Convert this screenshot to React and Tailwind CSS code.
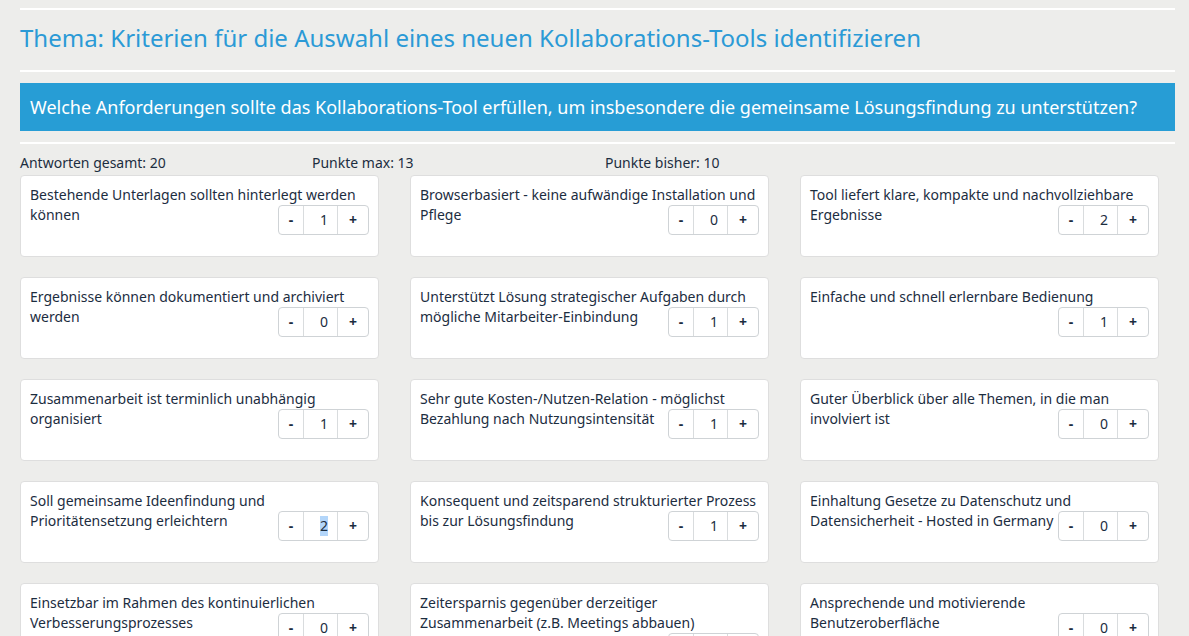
const items = [
  { text: "Bestehende Unterlagen sollten hinterlegt werden können", value: 1 },
  { text: "Browserbasiert - keine aufwändige Installation und Pflege", value: 0 },
  { text: "Tool liefert klare, kompakte und nachvollziehbare Ergebnisse", value: 2 },
  { text: "Ergebnisse können dokumentiert und archiviert werden", value: 0 },
  { text: "Unterstützt Lösung strategischer Aufgaben durch mögliche Mitarbeiter-Einbindung", value: 1 },
  { text: "Einfache und schnell erlernbare Bedienung", value: 1 },
  { text: "Zusammenarbeit ist terminlich unabhängig organisiert", value: 1 },
  { text: "Sehr gute Kosten-/Nutzen-Relation - möglichst Bezahlung nach Nutzungsintensität", value: 1 },
  { text: "Guter Überblick über alle Themen, in die man involviert ist", value: 0 },
  { text: "Soll gemeinsame Ideenfindung und Prioritätensetzung erleichtern", value: 2, selected: true },
  { text: "Konsequent und zeitsparend strukturierter Prozess bis zur Lösungsfindung", value: 1 },
  { text: "Einhaltung Gesetze zu Datenschutz und Datensicherheit - Hosted in Germany", value: 0 },
  { text: "Einsetzbar im Rahmen des kontinuierlichen Verbesserungsprozesses", value: 0 },
  { text: "Zeitersparnis gegenüber derzeitiger Zusammenarbeit (z.B. Meetings abbauen)", value: 0 },
  { text: "Ansprechende und motivierende Benutzeroberfläche", value: 0 },
]

function Stepper({ value, selected }) {
  return (
    <span className="float-right flex h-[30px] w-[91px] rounded-[4px] border border-[#cfd3d6] bg-white text-[14px] text-[#1c2d3f]">
      <button className="w-[25px] border-r border-[#d9dcde] font-bold leading-none">-</button>
      <span className="flex-1 flex items-center justify-end pr-[9px] border-r border-[#d9dcde]">
        {selected ? <span className="bg-[#b3d6fa]">{value}</span> : value}
      </span>
      <button className="w-[30px] font-bold leading-none">+</button>
    </span>
  )
}

function Card({ item }) {
  return (
    <div className="h-[82px] rounded-[4px] border border-[#dedede] bg-white px-[9px] pt-[9px] text-[14px] leading-[20px] text-[#1c2d3f]">
      {item.text}
      <Stepper value={item.value} selected={item.selected} />
    </div>
  )
}

export default function App() {
  return (
    <div
      className="min-h-screen bg-[#ededeb] pl-[20px] pt-[8px] overflow-hidden"
      style={{ fontFamily: '"Noto Sans", "Open Sans", sans-serif' }}
    >
      <div className="w-[1155px]">
        <div className="h-[2px] bg-white"></div>
        <h1 className="pt-[13px] pb-[17px] text-[24px] leading-[30px] text-[#2b9ad6]">
          Thema: Kriterien für die Auswahl eines neuen Kollaborations-Tools identifizieren
        </h1>
        <div className="h-[2px] bg-white"></div>
        <div className="mt-[11px] h-[48px] flex items-center bg-[#279dd5] px-[10px] text-[18px] text-white">
          Welche Anforderungen sollte das Kollaborations-Tool erfüllen, um insbesondere die gemeinsame Lösungsfindung zu unterstützen?
        </div>
        <div className="mt-[11px] h-[2px] bg-white"></div>
      </div>
      <div className="flex pt-[9px] h-[31px] text-[14px] leading-[20px] text-[#1c2d3f]">
        <div className="w-[292px]">Antworten gesamt: 20</div>
        <div className="w-[293px]">Punkte max: 13</div>
        <div className="w-[292px]">Punkte bisher: 10</div>
      </div>
      <div className="grid grid-cols-[359px_359px_359px] gap-x-[31px] gap-y-[20px]">
        {items.map((item, i) => (
          <Card key={i} item={item} />
        ))}
      </div>
    </div>
  )
}
